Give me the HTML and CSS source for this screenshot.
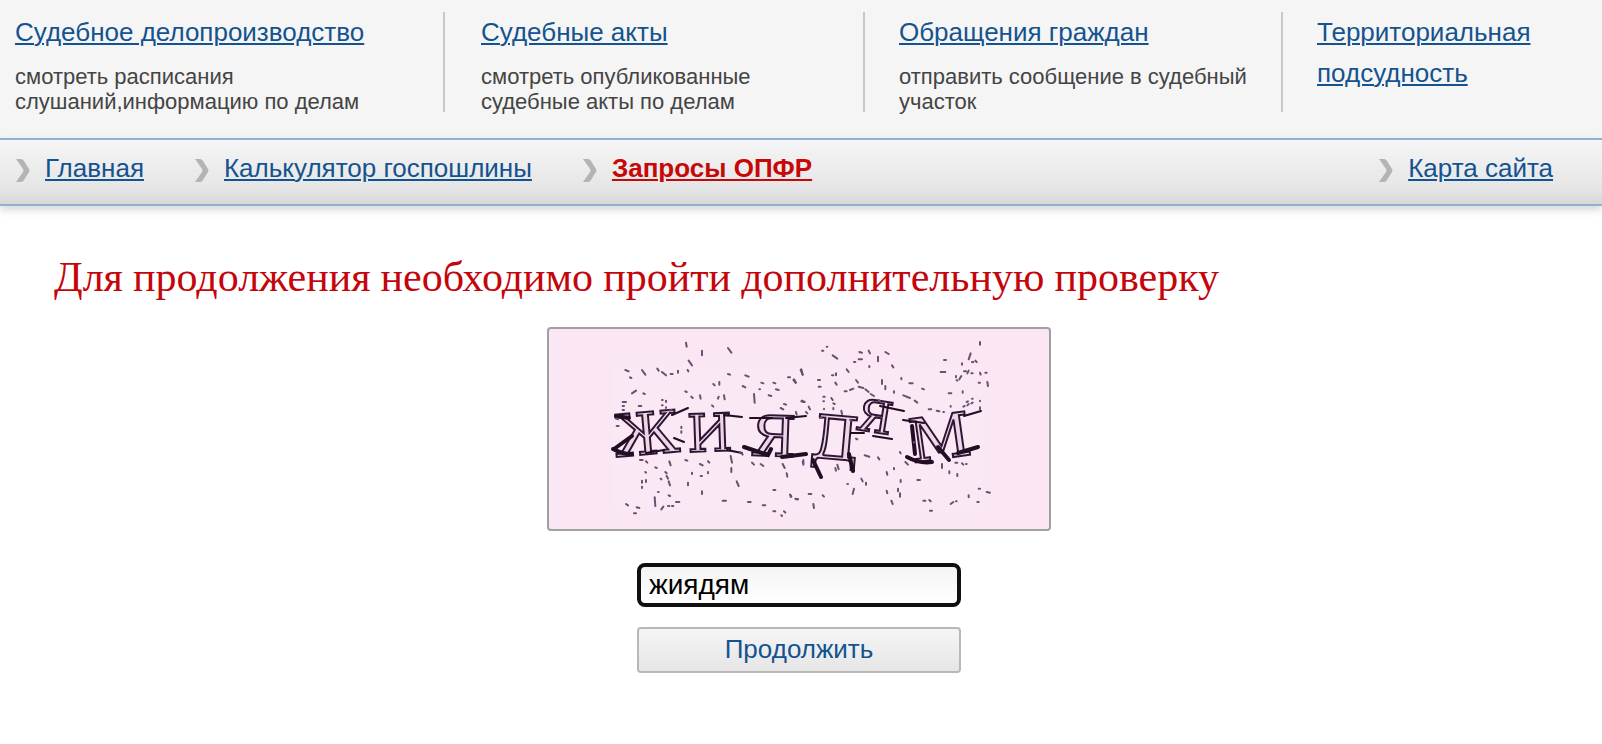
FILE: index.html
```html
<!DOCTYPE html>
<html lang="ru">
<head>
<meta charset="utf-8">
<title>Дополнительная проверка</title>
<link rel="stylesheet" href="styles.css">
</head>
<body>
<header class="services">
  <section class="service">
    <a class="service-link" href="#">Судебное делопроизводство</a>
    <p class="service-note">смотреть расписания слушаний,информацию по делам</p>
  </section>
  <section class="service">
    <a class="service-link" href="#">Судебные акты</a>
    <p class="service-note">смотреть опубликованные судебные акты по делам</p>
  </section>
  <section class="service">
    <a class="service-link" href="#">Обращения граждан</a>
    <p class="service-note">отправить сообщение в судебный участок</p>
  </section>
  <section class="service">
    <a class="service-link" href="#">Территориальная подсудность</a>
  </section>
</header>
<nav class="menu">
  <a class="menu-link" href="#"><svg class="chevron" viewBox="0 0 15 23" aria-hidden="true"><path d="M0 0H5Q7 0 8 2L13 10Q14 11.500 13 13L8 21Q7 23 5 23H0L7 13Q8 11.500 7 10Z"/></svg><span class="menu-text">Главная</span></a>
  <a class="menu-link" href="#"><svg class="chevron" viewBox="0 0 15 23" aria-hidden="true"><path d="M0 0H5Q7 0 8 2L13 10Q14 11.500 13 13L8 21Q7 23 5 23H0L7 13Q8 11.500 7 10Z"/></svg><span class="menu-text">Калькулятор госпошлины</span></a>
  <a class="menu-link menu-link-active" href="#"><svg class="chevron" viewBox="0 0 15 23" aria-hidden="true"><path d="M0 0H5Q7 0 8 2L13 10Q14 11.500 13 13L8 21Q7 23 5 23H0L7 13Q8 11.500 7 10Z"/></svg><span class="menu-text">Запросы ОПФР</span></a>
  <a class="menu-link menu-link-last" href="#"><svg class="chevron" viewBox="0 0 15 23" aria-hidden="true"><path d="M0 0H5Q7 0 8 2L13 10Q14 11.500 13 13L8 21Q7 23 5 23H0L7 13Q8 11.500 7 10Z"/></svg><span class="menu-text">Карта сайта</span></a>
</nav>
<main class="check">
  <h1 class="check-title">Для продолжения необходимо пройти дополнительную проверку</h1>
  <form class="check-form">
    <svg class="captcha" viewBox="549 329 500 200" role="img" aria-label="Проверочный код">
      <defs><filter id="soft" x="-5%" y="-5%" width="110%" height="110%"><feGaussianBlur stdDeviation="0.7"/></filter></defs>
      <rect class="captcha-haze" x="612" y="364" width="370" height="150" rx="6"/>
      <g filter="url(#soft)">
        <g class="captcha-letters">
          <text x="614" y="454" font-size="58" transform="rotate(-5 648 432)">Ж</text>
          <text x="687" y="451" font-size="52" transform="rotate(-2 715 432)">И</text>
          <text x="751" y="456" font-size="56" transform="rotate(2 775 436)">Я</text>
          <text x="811" y="459" font-size="60" transform="rotate(5 834 436)">Д</text>
          <text x="857" y="433" font-size="44" transform="rotate(9 880 418)">Я</text>
          <text x="909" y="458" font-size="60" transform="rotate(-8 945 436)">М</text>
        </g>
        <!-- heavy parts of the letters -->
        <path class="captcha-ink" d="M613 449Q622 454 631 454M616 416L629 418M614 449L632 436"/>
        <path class="captcha-ink" d="M744 447L768 455L771 449M782 457L806 454M813 460L821 477M849 454L853 471"/>
        <path class="captcha-ink" d="M907 457Q920 464 932 462M912 426L915 454M938 447L949 460M958 453L978 447"/>
        <path class="captcha-line" d="M672 415L688 408M674 438L684 442M646 453L664 450M724 415L742 417M727 450L742 453M750 418L772 418M786 418L806 416M851 433L864 433M880 406L904 411M873 436L892 439M903 420L924 423M964 416L981 411"/>
        <!-- specks, first half -->
        <g transform="translate(540 320) scale(.33333)">
          <path class="speck" d="M438 68l2 12M486 92v14M564 84l10 14M446 122l10 14M443 150l2 4M256 150l10 4M306 150l10 14M270 172l4 2M352 146l4 6M366 156l12 10M392 162l6 0M414 152l0 6M564 162l6 2M616 166l10 4M608 198l8 4M664 188l6 2M700 188l6 2M642 222l2 26M658 208l2 0M708 208l8 2M686 226l8 2M744 172l6 0M762 178l6 10M784 148l4 16M520 192l4 4M538 186l0 8M552 226l2 12M536 230l-2 6M516 256l4 4M436 214l4 2M454 230l4 4M480 226l2 10M276 220l12 -8M310 220l4 2M248 246h10M248 258h4M248 270h4M296 258l8 0M366 240h2M378 242v4M366 256h2M378 262v2M388 272l6 -2M228 296l6 2M230 318l6 0M722 264l8 4M732 252l6 2M768 276l2 8M784 244l6 2M424 320v4M424 334v4"/>
          <path class="speck" d="M300 420l8 0M318 424l4 4M346 442l4 2M316 456l2 2M306 482v6M318 480v6M306 500v4M362 476l2 2M376 456l4 4M380 468l4 8M386 484l4 12M388 424l4 12M436 420l6 2M456 458v4M444 488v8M480 432l8 4M504 424l4 4M482 468h4M504 456v4M486 514v8M354 516h2M344 532l2 26M386 526l4 2M364 568l6 -8M384 558h4M396 558h4M408 546l10 0M282 580l6 0M290 562l8 2M258 552l6 4M572 408l4 20M574 444v12M590 484l6 14M636 428l6 6M662 432l8 6M728 432l6 12M740 460l2 10M700 510h6M548 542h10M624 546h8M668 556h8M700 574h6M724 586l2 2M732 574l4 4M750 524l4 6M766 536l8 2M790 420v14M600 396l8 8"/>
        </g>
        <!-- specks, second half -->
        <g transform="translate(790 320) scale(.33333)">
          <path class="speck" d="M96 92h4M110 80h2M128 106l14 10M208 96l8 2M236 92l4 8M286 96l10 6M206 118l10 0M238 138l0 4M264 110v14M306 136l4 6M192 126h4M170 148l6 8M126 166h4M138 160v6M84 180l6 0M86 200h6M32 150l6 14M10 180l6 8M136 188l4 6M164 214h6M198 180l6 8M206 200l14 4M226 208l10 8M242 222l10 6M180 210l10 -4M276 180v12M286 198v10M312 214v4M334 174v4M358 190h10M396 206l6 2M266 240l4 4M340 226l20 8M374 242l8 6M462 120h6M452 156h14M516 130v4M536 118l6 -18M556 122l4 4M570 66v8M546 126l4 0M498 168v4M514 168l-6 10M500 180l2 2M522 154h6M536 152l-4 8M544 160h4M570 158l2 6M586 158h4M566 188h4M592 186l2 12M476 220h8M518 214v4M530 246l4 -2M546 236l2 0M520 260l4 -2M532 256l4 -4M544 250l4 -2M482 258v2M440 272l8 2M460 276h2M416 268h8M570 242v2M570 262v6M100 230h4M100 244h2M102 266v2M124 234l4 6M130 250l4 2M130 264v4M154 272l2 10M56 260l4 8M48 276l4 4M36 242l8 4M90 294l4 0M180 300l6 2"/>
          <path class="speck" d="M224 406l14 4M264 412l4 6M346 426l8 8M142 434l4 14M136 444l2 8M38 426l2 4M290 456l2 8M312 444v4M332 480v6M382 480h8M214 476l4 8M228 488v6M172 492h2M192 506l-4 16M290 512l2 8M324 506v8M330 520v10M304 542l4 10M400 542h6M418 540l4 4M420 572h6M456 432v12M496 428h6M516 430l4 4M528 432h2M478 454v6M502 462v6M482 552l8 -6M498 544h2M536 526v6M566 506h4M562 546h4M590 516l10 2M56 522h8M98 526l4 4M70 552l2 12M18 538h6M2 526v4M330 396l2 4M372 366v2M198 356l4 2"/>
        </g>
      </g>
    </svg>
    <input class="check-input" type="text" aria-label="Код с картинки" value="жиядям">
    <button class="check-button" type="button">Продолжить</button>
  </form>
</main>
</body>
</html>
```
FILE: styles.css
```css
* {
  box-sizing: border-box;
}

body {
  margin: 0;
  background: #fff;
  font-family: "Liberation Sans", Arial, sans-serif;
  font-size: 26px;
}

.services {
  display: grid;
  grid-template-columns: 445fr 420fr 418fr 319fr;
  padding: 12px 0 26px;
  background: #f5f5f5;
}

.service {
  min-height: 100px;
  padding: 0 34px;
  border-right: 2px solid #c8c8c8;
  line-height: 41px;
}

.service:first-child {
  padding-left: 15px;
}

.service:nth-child(2) {
  padding-left: 36px;
}

.service:last-child {
  border-right: 0;
}

.service-link,
.menu-text {
  color: #14538f;
  text-decoration: underline;
  text-decoration-thickness: 2px;
  text-underline-offset: 2px;
}

.service-note {
  margin: 11px 0 -2px;
  color: #444;
  font-size: 22px;
  line-height: 25px;
}

.menu {
  display: flex;
  gap: 51px;
  height: 68px;
  padding: 10px 49px 0 16px;
  border: solid #8fb2d4;
  border-width: 2px 0;
  background: linear-gradient(#f5f5f5, #e6e6e6 75%, #d8d8d8);
  box-shadow: 0 4px 8px rgba(0, 0, 0, .16);
}

.menu-link {
  display: flex;
  gap: 14px;
  height: 38px;
  align-items: center;
  text-decoration: none;
}

.menu-link-active .menu-text {
  color: #c60808;
  font-weight: bold;
}

.menu-link-last {
  margin-left: auto;
}

.menu-text {
  line-height: 34px;
  padding-bottom: 2px;
}

.chevron {
  width: 15px;
  height: 23px;
  margin-top: 2px;
  fill: #b4b4b4;
}

.check {
  padding: 49px 4px 40px 0;
}

.check-title {
  margin: 0;
  padding-left: 54px;
  color: #c4060c;
  font-family: Georgia, Gelasio, "Liberation Serif", serif;
  font-size: 42px;
  font-weight: normal;
  line-height: 48px;
}

.check-form {
  display: flex;
  flex-direction: column;
  align-items: center;
  margin-top: 24px;
}

.captcha {
  width: 504px;
  height: 204px;
  border: 2px solid #a0a0a4;
  border-radius: 4px;
  background: #fae7f3;
}

.captcha-haze {
  fill: #fae8f5;
}

.captcha-letters {
  fill: #ecd6e8;
  stroke: #2d1230;
  stroke-width: 2;
  font-family: "DejaVu Serif", serif;
}

.captcha-ink,
.captcha-line {
  fill: none;
  stroke: #210a24;
  stroke-width: 4;
  stroke-linecap: round;
}

.captcha-line {
  stroke-width: 2;
}

.speck {
  fill: none;
  stroke: #6d506f;
  stroke-width: 6;
  stroke-linecap: round;
}

.check-input,
.check-button {
  width: 324px;
  font: inherit;
}

.check-input {
  height: 44px;
  margin-top: 32px;
  padding: 0 8px;
  border: 4px solid #101010;
  border-radius: 8px;
  outline: 0;
  background: linear-gradient(#f4f4f4, #fff);
  color: #000;
  font-size: 28px;
}

.check-button {
  height: 46px;
  margin-top: 20px;
  padding: 0 0 2px;
  border: 2px solid #b8b8b8;
  border-radius: 4px;
  background: linear-gradient(#f5f5f5, #e6e6e6);
  color: #14538f;
}
```
